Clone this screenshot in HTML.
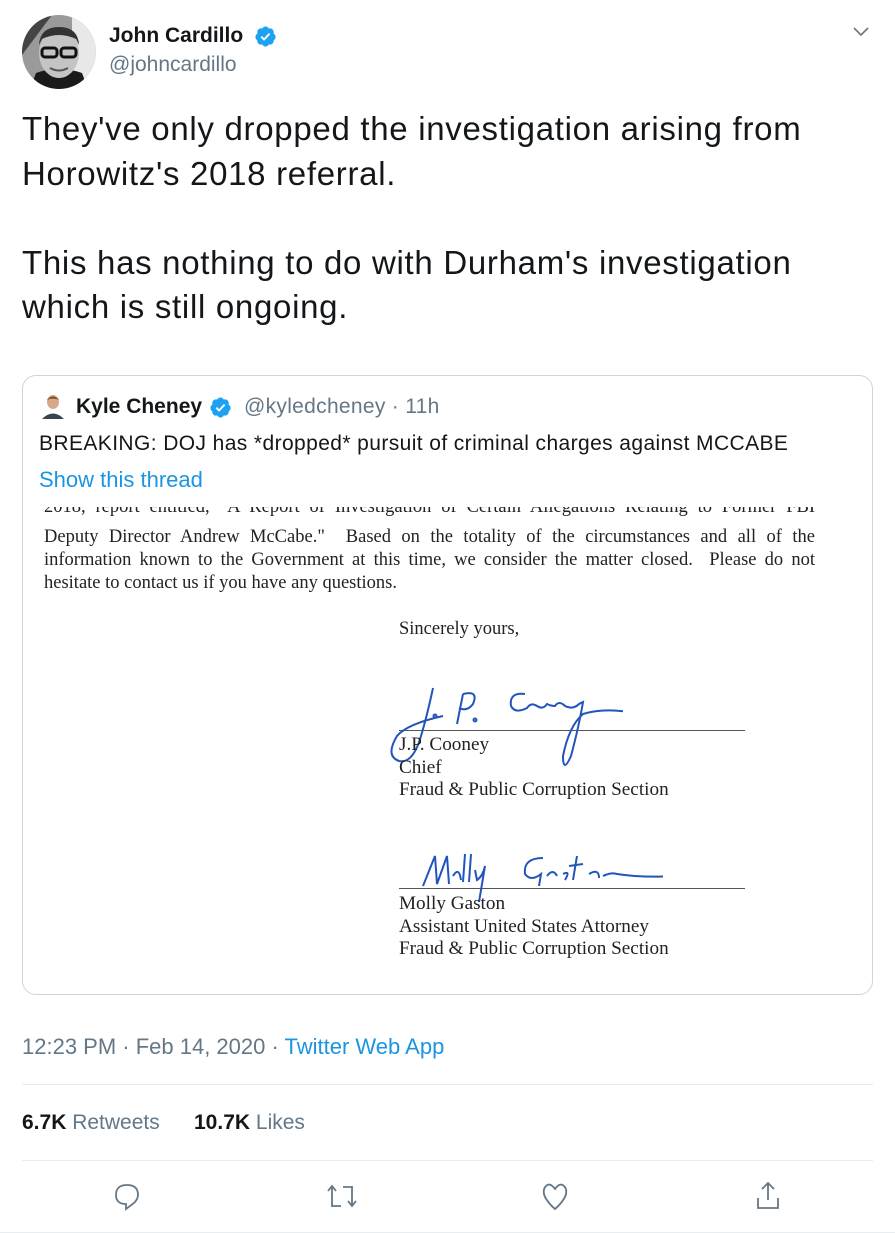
<!DOCTYPE html>
<html><head><meta charset="utf-8"><style>
*{margin:0;padding:0;box-sizing:border-box}
body{width:895px;height:1233px;background:#fff;position:relative;overflow:hidden;font-family:"Liberation Sans",Arial,sans-serif;color:#14171a}
.a{position:absolute;white-space:nowrap}
.doc{font-family:"Liberation Serif","Times New Roman",serif;color:#222;font-size:18.5px}
.g{color:#657786}
.b{color:#1b95e0}
hr{position:absolute;border:0;height:1px;background:#e6ecf0}
</style></head><body>
<svg class="a" style="left:22px;top:15px" width="74" height="74" viewBox="0 0 74 74">
<defs><clipPath id="c"><circle cx="37" cy="37" r="37"/></clipPath></defs>
<g clip-path="url(#c)"><rect width="74" height="74" fill="#9a9a9a"/><rect x="50" y="0" width="24" height="74" fill="#e8e8e8"/><path d="M0 0 L30 0 L0 40Z" fill="#444"/>
<path d="M8 74 L14 58 Q37 50 60 58 L66 74Z" fill="#1a1a1a"/>
<ellipse cx="37" cy="38" rx="20" ry="25" fill="#c4c4c4"/>
<path d="M17 30 Q18 12 37 12 Q56 12 57 30 L54 24 Q37 16 20 24Z" fill="#333"/>
<rect x="20" y="33" width="15" height="9" rx="3" fill="none" stroke="#111" stroke-width="3"/>
<rect x="39" y="33" width="15" height="9" rx="3" fill="none" stroke="#111" stroke-width="3"/>
<path d="M28 53 Q37 58 46 53" stroke="#555" stroke-width="2" fill="none"/></g></svg>
<div class="a" style="left:109px;top:24px;font-size:21px;font-weight:bold">John Cardillo</div>
<svg class="a" style="left:254px;top:25px" width="23" height="23" viewBox="0 0 24 24"><path fill="#1da1f2" d="M22.5 12.5c0-1.58-.875-2.950-2.148-3.6.154-.435.238-.905.238-1.4 0-2.21-1.710-3.998-3.818-3.998-.47 0-.92.084-1.336.25C14.818 2.415 13.51 1.5 12 1.5s-2.816.917-3.437 2.25c-.415-.165-.866-.25-1.336-.25-2.11 0-3.818 1.79-3.818 4 0 .494.083.964.237 1.4-1.272.65-2.147 2.018-2.147 3.6 0 1.495.782 2.798 1.942 3.486-.02.17-.032.34-.032.514 0 2.21 1.708 4 3.818 4 .47 0 .92-.086 1.335-.25.62 1.334 1.926 2.25 3.437 2.25 1.512 0 2.818-.916 3.437-2.25.415.163.865.248 1.336.248 2.11 0 3.818-1.79 3.818-4 0-.174-.012-.344-.033-.513 1.158-.687 1.943-1.99 1.943-3.484z"/><path fill="#fff" d="M10.5 16.5l-3.6-3.6 1.4-1.4 2.2 2.2 5-5.4 1.5 1.3z"/></svg>
<div class="a g" style="left:109px;top:53px;font-size:21px">@johncardillo</div>
<svg class="a" style="left:852px;top:25px" width="18" height="14" viewBox="0 0 18 14"><path d="M2 3 L9 10 L16 3" stroke="#657786" stroke-width="1.6" fill="none"/></svg>
<div class="a" style="left:22px;top:107px;font-size:33px;letter-spacing:0.7px;line-height:44.5px;white-space:normal;width:870px">They've only dropped the investigation arising from<br>Horowitz's 2018 referral.<br><br>This has nothing to do with Durham's investigation<br>which is still ongoing.</div>

<div class="a" style="left:22px;top:375px;width:851px;height:620px;border:1px solid #ccd6dd;border-radius:14px;overflow:hidden">
<svg class="a" style="left:18px;top:17px" width="24" height="26" viewBox="0 0 24 26"><rect width="24" height="26" fill="#fff"/><ellipse cx="12" cy="9" rx="6" ry="7" fill="#d9a88a"/><path d="M6 7 Q12 0 18 7 Q12 4 6 7Z" fill="#6b4a2a"/><path d="M1 26 Q12 15 23 26Z" fill="#3a4450"/></svg>
<div class="a" style="left:53px;top:19px;font-size:21px;font-weight:bold">Kyle Cheney</div>
<svg class="a" style="left:186px;top:20px" width="23" height="23" viewBox="0 0 24 24"><path fill="#1da1f2" d="M22.5 12.5c0-1.58-.875-2.95-2.148-3.6.154-.435.238-.905.238-1.4 0-2.21-1.71-3.998-3.818-3.998-.47 0-.92.084-1.336.25C14.818 2.415 13.51 1.5 12 1.5s-2.816.917-3.437 2.250c-.415-.165-.866-.25-1.336-.25-2.11 0-3.818 1.79-3.818 4 0 .494.083.964.237 1.4-1.272.65-2.147 2.018-2.147 3.6 0 1.495.782 2.798 1.942 3.486-.02.17-.032.34-.032.514 0 2.21 1.708 4 3.818 4 .47 0 .92-.086 1.335-.25.62 1.334 1.926 2.25 3.437 2.25 1.512 0 2.818-.916 3.437-2.25.415.163.865.248 1.336.248 2.11 0 3.818-1.79 3.818-4 0-.174-.012-.344-.033-.513 1.158-.687 1.943-1.99 1.943-3.484z"/><path fill="#fff" d="M10.5 16.5l-3.6-3.6 1.4-1.4 2.2 2.2 5-5.4 1.5 1.3z"/></svg>
<div class="a g" style="left:221px;top:19px;font-size:21px;letter-spacing:0.3px">@kyledcheney · 11h</div>
<div class="a" style="left:16px;top:56px;font-size:21px;letter-spacing:0.4px">BREAKING: DOJ has *dropped* pursuit of criminal charges against MCCABE</div>
<div class="a b" style="left:16px;top:91px;font-size:22px">Show this thread</div>
<div class="a doc" style="left:21px;top:131px;width:771px;overflow:hidden;height:10px"><div style="margin-top:-10px;text-align:justify;text-align-last:justify">2018, report entitled, "A Report of Investigation of Certain Allegations Relating to Former FBI</div></div>
<div class="a doc" style="left:21px;top:150px;width:771px;line-height:23px;white-space:normal;text-align:justify">Deputy Director Andrew McCabe." &nbsp;Based on the totality of the circumstances and all of the information known to the Government at this time, we consider the matter closed. &nbsp;Please do not hesitate to contact us if you have any questions.</div>
<div class="a doc" style="left:376px;top:243px">Sincerely yours,</div>
<div class="a" style="left:376px;top:354px;width:346px;height:1px;background:#555"></div>
<svg class="a" style="left:360px;top:300px" width="240" height="100" viewBox="0 0 240 100" fill="none" stroke="#2255bb" stroke-width="2"><path d="M50 12 Q44 40 38 60 Q30 88 16 85 Q2 80 14 60 Q24 48 60 40"/><circle cx="52" cy="40" r="1.5"/><path d="M80 18 L74 48 M80 18 Q96 14 90 28 Q84 36 76 32"/><circle cx="92" cy="44" r="1.5"/><path d="M142 18 Q126 16 128 30 Q132 38 144 32 Q148 26 154 30 Q160 34 164 28 Q168 30 172 30 Q176 24 182 30 Q190 34 196 28 L200 26 Q196 50 188 80 Q180 98 180 80 Q186 50 200 38 Q220 32 245 36"/></svg>
<div class="a doc" style="left:376px;top:358px;line-height:22.5px;font-size:19.2px">J.P. Cooney<br>Chief<br>Fraud &amp; Public Corruption Section</div>
<div class="a" style="left:376px;top:512px;width:346px;height:1px;background:#555"></div>
<svg class="a" style="left:390px;top:470px" width="250" height="60" viewBox="0 0 250 60" fill="none" stroke="#2255bb" stroke-width="2"><path d="M10 40 L22 10 L24 38 L34 10 L36 38 M40 30 Q46 20 48 34 M52 8 L50 36 M58 8 L56 36 M62 24 L64 34 Q70 30 72 20 L66 56"/><path d="M130 12 Q110 12 112 28 Q118 36 128 28 L126 40 M134 30 Q140 22 144 30 M150 28 Q158 24 152 34 M164 10 L160 34 M156 20 L170 18 M176 28 Q186 22 186 32 M190 30 Q198 26 204 28 Q230 32 262 30"/></svg>
<div class="a doc" style="left:376px;top:517px;line-height:22.5px;font-size:19.2px">Molly Gaston<br>Assistant United States Attorney<br>Fraud &amp; Public Corruption Section</div>
</div>

<div class="a g" style="left:22px;top:1034px;font-size:22px">12:23 PM · Feb 14, 2020 · <span class="b">Twitter Web App</span></div>
<hr style="left:22px;top:1084px;width:851px">
<div class="a" style="left:22px;top:1111px;font-size:21px"><b>6.7K</b> <span class="g">Retweets</span></div>
<div class="a" style="left:194px;top:1111px;font-size:21px"><b>10.7K</b> <span class="g">Likes</span></div>
<hr style="left:22px;top:1160px;width:851px">
<svg class="a" style="left:112px;top:1181px" width="30" height="30" viewBox="0 0 30 30" fill="none" stroke="#657786" stroke-width="1.8"><path d="M15 4 Q26 4 26 14 Q26 18 22 22 L14 28 L14 23 Q4 23 4 14 Q4 4 15 4Z"/></svg>
<svg class="a" style="left:326px;top:1181px" width="32" height="30" viewBox="0 0 32 30" fill="none" stroke="#657786" stroke-width="1.8"><path d="M6 26 L6 6 M2 10 L6 5 L10 10 M6 25 L15 25 M26 5 L26 25 M22 20 L26 25 L30 20 M26 6 L17 6"/></svg>
<svg class="a" style="left:540px;top:1181px" width="30" height="30" viewBox="0 0 30 30" fill="none" stroke="#657786" stroke-width="1.8"><path d="M15 8 Q10 1 6 5 Q2 9 5 16 Q9 23 15 28 Q21 23 25 16 Q28 9 24 5 Q20 1 15 8Z"/></svg>
<svg class="a" style="left:753px;top:1180px" width="30" height="32" viewBox="0 0 30 32" fill="none" stroke="#657786" stroke-width="1.8"><path d="M15 3 L15 20 M9 9 L15 3 L21 9 M5 18 L5 28 L25 28 L25 18"/></svg>
<hr style="left:0;top:1232px;width:895px">
</body></html>
